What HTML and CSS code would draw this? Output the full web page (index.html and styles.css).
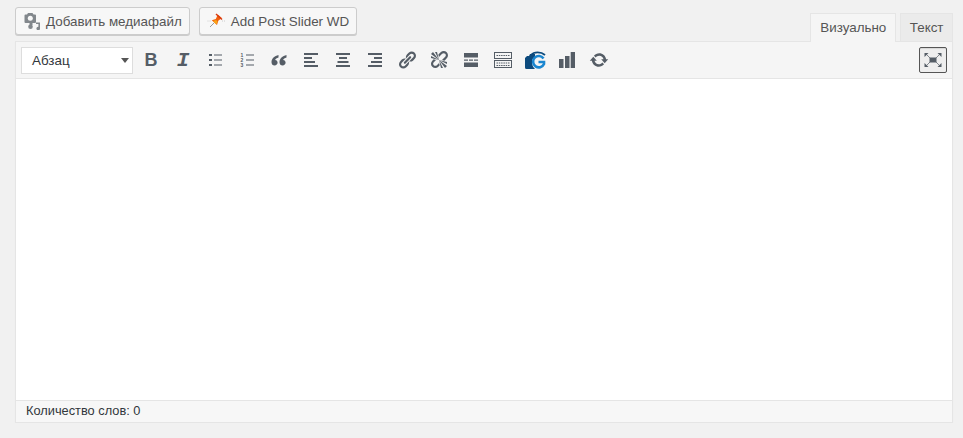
FILE: index.html
```html
<!DOCTYPE html>
<html lang="ru">
<head>
    <meta charset="UTF-8">
    <meta name="viewport" content="width=device-width, initial-scale=1.0">
    <title>Редактор</title>
    <link rel="stylesheet" href="styles.css">
</head>
<body>
    <div class="editor">
        <div class="editor-top">
            <div class="media-buttons">
                <button class="btn">
                    <svg class="btn-icon" width="18" height="18" viewBox="0 0 18 18">
                        <path d="M2.500 2.500h1.500l1-1.500h4.500l1 1.500h1.500a1 1 0 0 1 1 1v6.500a1 1 0 0 1-1 1h-2.500v2h-3v-2H2.500a1 1 0 0 1-1-1V3.500a1 1 0 0 1 1-1z" fill="#82878c"/>
                        <circle cx="7.300" cy="6.300" r="2.500" fill="#f7f7f7"/>
                        <circle cx="7.500" cy="14.700" r="2.300" fill="#82878c"/>
                        <path d="M13 10.500h4v6a1.800 1.800 0 1 1-1.600-1.800v-2.700H13z" fill="#82878c"/>
                    </svg>
                    Добавить медиафайл
                </button>
                <button class="btn btn-slider">
                    <svg class="btn-icon" width="18" height="18" viewBox="0 0 18 18">
                        <path d="M0.500 9h3M15 9h3" stroke="#ccc" stroke-width="1" stroke-dasharray="1 1"/>
                        <path d="M3 15l4-4" stroke="#999" stroke-width="1"/>
                        <path d="M4.800 8.200l4-1.200 2-4.500 4 3.500-3.500 2.700-1.300 4.300z" fill="#f2600c"/>
                        <path d="M9.500 1.500l6 5.500-1 1-6-5.500z" fill="#d93a10"/>
                        <path d="M6 9l3-1 1.500 1.500-1 3z" fill="#f7a516"/>
                    </svg>
                    Add Post Slider WD
                </button>
            </div>
            <div class="tabs">
                <span class="tab tab-active">Визуально</span>
                <span class="tab">Текст</span>
            </div>
        </div>

        <div class="editor-box">
            <div class="toolbar">
                <div class="format-select">
                    <span>Абзац</span>
                    <i class="caret"></i>
                </div>
                <div class="tool-group">
                    <span class="tool tool-bold">B</span>
                    <span class="tool tool-italic">I</span>
                    <span class="tool">
                        <svg width="20" height="20" viewBox="0 0 20 20" class="ico">
                            <path d="M4 4h3v2H4zM4 9h3v2H4zM4 14h3v2H4z"/>
                            <path d="M9 4.500h8v1H9zM9 9.500h8v1H9zM9 14.500h8v1H9z"/>
                        </svg>
                    </span>
                    <span class="tool">
                        <svg width="20" height="20" viewBox="0 0 20 20" class="ico">
                            <text x="3.500" y="6.500" class="ol-num">1</text>
                            <text x="3.500" y="11.500" class="ol-num">2</text>
                            <text x="3.500" y="16.500" class="ol-num">3</text>
                            <path d="M9 4.500h8v1H9zM9 9.500h8v1H9zM9 14.500h8v1H9z"/>
                        </svg>
                    </span>
                    <span class="tool">
                        <svg width="20" height="20" viewBox="0 0 20 20" class="ico">
                            <path d="M9.500 5C5.500 6 2.500 8.500 2.500 12.200c0 2 1.300 3.300 3.100 3.300 1.700 0 3-1.300 3-2.900 0-1.500-1-2.600-2.500-2.700C6.400 8.800 7.700 8 9.500 7.500z"/>
                            <path d="M17.500 5c-4 1-7 3.500-7 7.200 0 2 1.300 3.300 3.100 3.300 1.700 0 3-1.300 3-2.900 0-1.500-1-2.600-2.500-2.700.3-1.100 1.600-1.900 3.400-2.400z"/>
                        </svg>
                    </span>
                    <span class="tool">
                        <svg width="20" height="20" viewBox="0 0 20 20" class="ico">
                            <path d="M3 3h14v2H3zM3 7h8v2H3zM3 11h11v2H3zM3 15h14v2H3z"/>
                        </svg>
                    </span>
                    <span class="tool">
                        <svg width="20" height="20" viewBox="0 0 20 20" class="ico">
                            <path d="M3 3h14v2H3zM6 7h8v2H6zM4.500 11h11v2h-11zM3 15h14v2H3z"/>
                        </svg>
                    </span>
                    <span class="tool">
                        <svg width="20" height="20" viewBox="0 0 20 20" class="ico">
                            <path d="M3 3h14v2H3zM9 7h8v2H9zM6 11h11v2H6zM3 15h14v2H3z"/>
                        </svg>
                    </span>
                    <span class="tool">
                        <svg width="20" height="20" viewBox="0 0 20 20" class="ico">
                            <path d="M17.740 2.760c1.680 1.690 1.680 4.410 0 6.100l-1.530 1.520c-1.120 1.120-2.700 1.470-4.140 1.090l2.620-2.610.76-.77.76-.76c.84-.84.84-2.200 0-3.040-.84-.85-2.200-.85-3.040 0l-.77.76-3.380 3.380c-.37-1.440-.02-3.020 1.100-4.140l1.520-1.530c1.690-1.680 4.420-1.680 6.100 0zM8.590 13.430l5.340-5.340c.42-.42.42-1.100 0-1.520-.44-.43-1.130-.39-1.530 0l-5.330 5.340c-.42.42-.42 1.100 0 1.520.44.43 1.130.39 1.520 0zm-.76 2.290l4.140-4.150c.38 1.440.03 3.020-1.090 4.140l-1.520 1.530c-1.690 1.680-4.410 1.680-6.100 0-1.680-1.680-1.680-4.420 0-6.100l1.530-1.520c1.120-1.120 2.700-1.470 4.140-1.100l-4.140 4.150c-.85.84-.85 2.200 0 3.050.84.84 2.200.84 3.040 0z"/>
                        </svg>
                    </span>
                    <span class="tool">
                        <svg width="20" height="20" viewBox="0 0 20 20" class="ico">
                            <path d="M17.740 2.260c1.680 1.690 1.680 4.410 0 6.100l-1.530 1.520c-.32.33-.69.58-1.080.77L13 10l1.690-1.640.76-.77.76-.76c.84-.84.84-2.200 0-3.040-.84-.85-2.200-.85-3.040 0l-.77.76-.76.76L10 7l-.65-2.140c.19-.38.44-.75.77-1.070l1.520-1.530c1.690-1.680 4.420-1.680 6.100 0zM2 4l8 6-6-8zm4-2l4 8-2-8H6zM2 6l8 4-8-2V6zm7.360 7.690L10 13l.74 2.350-1.380 1.390c-1.690 1.680-4.410 1.680-6.100 0-1.680-1.680-1.680-4.420 0-6.100l1.390-1.380L7 10l-.69.64-1.520 1.530c-.85.84-.85 2.200 0 3.040.84.85 2.200.85 3.040 0zM18 16l-8-6 6 8zm-4 2l-4-8 2 8h2zm4-4l-8-4 8 2v2z"/>
                        </svg>
                    </span>
                    <span class="tool">
                        <svg width="20" height="20" viewBox="0 0 20 20" class="ico">
                            <path d="M3 3h14v4.500H3zM3 12.500h14V17H3zM3 9.500h4v1.300H3zM8 9.500h4v1.300H8zM13 9.500h4v1.300h-4z"/>
                        </svg>
                    </span>
                    <span class="tool">
                        <svg width="20" height="20" viewBox="0 0 20 20" class="kitchen">
                            <rect x="1.500" y="2.500" width="17" height="6"/>
                            <rect x="1.500" y="10.500" width="17" height="7"/>
                            <path d="M3.500 5.500h13M3.500 13h13M3.500 15.500h13" stroke-dasharray="1.500 .8"/>
                        </svg>
                    </span>
                    <span class="tool">
                        <svg width="22" height="20" viewBox="0 0 22 20">
                            <path d="M1 8l2-2h2l1-2h5v3c-2.500 1.500-3 3-3 5 0 3 1 5 3 7H2.500A1.500 1.500 0 0 1 1 17.500z" fill="#0c4a7d"/>
                            <path d="M7 5c3-3.500 10-3.500 14 0" fill="none" stroke="#0c4a7d" stroke-width="1.800"/>
                            <path d="M19.500 8.500a5.700 5.700 0 1 0 .5 5.500v-2h-5.500" fill="none" stroke="#1a86d0" stroke-width="2.600"/>
                        </svg>
                    </span>
                    <span class="tool">
                        <svg width="20" height="20" viewBox="0 0 20 20" class="ico">
                            <path d="M2 9h4.500v9H2zM8 6h4.500v12H8zM13.700 2H18v16h-4.300z"/>
                        </svg>
                    </span>
                    <span class="tool">
                        <svg width="20" height="20" viewBox="0 0 20 20" class="ico">
                            <path d="M10.200 3.280c3.530 0 6.430 2.610 6.920 6h2.080l-3.500 4-3.500-4h2.320c-.45-1.970-2.210-3.450-4.320-3.450-1.450 0-2.730.71-3.540 1.780L4.950 5.660C6.230 4.200 8.110 3.280 10.200 3.280zm-.4 13.440c-3.520 0-6.430-2.610-6.920-6H.8l3.500-4c1.170 1.330 2.330 2.670 3.500 4H5.480c.45 1.970 2.210 3.450 4.320 3.450 1.450 0 2.730-.71 3.540-1.780l1.710 1.950c-1.280 1.460-3.150 2.380-5.250 2.380z"/>
                        </svg>
                    </span>
                </div>
                <span class="tool tool-fullscreen">
                    <svg width="20" height="20" viewBox="0 0 20 20" class="ico">
                        <path d="M6.500 7.500h7v5h-7z"/>
                        <path d="M1.500 3h4l-4 4zM18.500 3v4l-4-4zM1.500 17v-4l4 4zM18.500 17h-4l4-4z"/>
                        <path d="M3.500 4.500L7 8M16.500 4.500L13 8M3.500 15.500L7 12M16.500 15.500L13 12" stroke="#555d66" stroke-width="1" opacity="0.700"/>
                    </svg>
                </span>
            </div>
            <div class="editor-area"></div>
            <div class="statusbar">Количество слов: 0</div>
        </div>
    </div>
</body>
</html>
```

FILE: styles.css
```css
body {
    margin: 0;
    background: #f1f1f1;
    color: #32373c;
    font-family: "Liberation Sans", Arial, sans-serif;
    font-size: 13.4px;
}

.editor {
    padding: 0 10px 0 15px;
}

.editor-top {
    display: flex;
    justify-content: space-between;
    align-items: flex-end;
    height: 41px;
}

.media-buttons {
    display: flex;
    gap: 9px;
    align-self: flex-start;
    padding-top: 7px;
}

.btn {
    display: flex;
    align-items: center;
    gap: 5px;
    height: 28px;
    padding: 0 7px;
    background: #f7f7f7;
    border: 1px solid #ccc;
    border-radius: 3px;
    box-shadow: 0 1px 0 #ccc;
    color: #555;
    font-family: inherit;
    font-size: 13.4px;
}

.btn-slider {
    gap: 6px;
}

.btn-icon {
    flex: none;
}

.tabs {
    display: flex;
    gap: 4px;
}

.tab {
    height: 27px;
    line-height: 27px;
    padding: 0 8.500px;
    background: #ebebeb;
    border: 1px solid #e5e5e5;
    border-bottom: 0;
    color: #555;
}

.tab-active {
    height: 28px;
    margin-bottom: -1px;
    padding: 0 9px;
    background: #f5f5f5;
    position: relative;
    z-index: 1;
}

.editor-box {
    border: 1px solid #e5e5e5;
    background: #fff;
    box-shadow: 0 1px 1px rgba(0, 0, 0, 0.04);
}

.toolbar {
    display: flex;
    align-items: center;
    height: 36px;
    padding: 0 5px;
    background: #f5f5f5;
    border-bottom: 1px solid #e5e5e5;
}

.format-select {
    display: flex;
    justify-content: space-between;
    align-items: center;
    box-sizing: border-box;
    width: 112px;
    height: 27px;
    padding: 0 2px 0 10px;
    background: #fff;
    border: 1px solid #ddd;
    color: #32373c;
}

.caret {
    width: 0;
    height: 0;
    margin-right: 1px;
    border-left: 4px solid transparent;
    border-right: 4px solid transparent;
    border-top: 5px solid #555;
}

.tool-group {
    display: flex;
    gap: 4px;
    margin-left: 4px;
}

.tool {
    display: flex;
    justify-content: center;
    align-items: center;
    width: 28px;
    height: 26px;
}

.tool-bold {
    color: #555d66;
    font-size: 18px;
    font-weight: bold;
}

.tool-italic {
    color: #555d66;
    font-family: "Liberation Mono", monospace;
    font-size: 21px;
    font-weight: bold;
    font-style: italic;
}

.ico {
    fill: #555d66;
}

.ol-num {
    font-family: "Liberation Sans", sans-serif;
    font-size: 5px;
    font-weight: bold;
}

.kitchen {
    fill: none;
    stroke: #555d66;
    stroke-width: 1;
}

.tool-fullscreen {
    box-sizing: border-box;
    margin-left: auto;
    border: 1px solid #555;
    border-radius: 2px;
    background: #eee;
    box-shadow: inset 0 1px 1px rgba(0, 0, 0, 0.1);
}

.editor-area {
    height: 321px;
    background: #fff;
}

.statusbar {
    box-sizing: border-box;
    height: 22px;
    line-height: 20px;
    padding: 0 10px;
    background: #f7f7f7;
    border-top: 1px solid #e5e5e5;
    font-size: 12.8px;
    color: #32373c;
}
```
